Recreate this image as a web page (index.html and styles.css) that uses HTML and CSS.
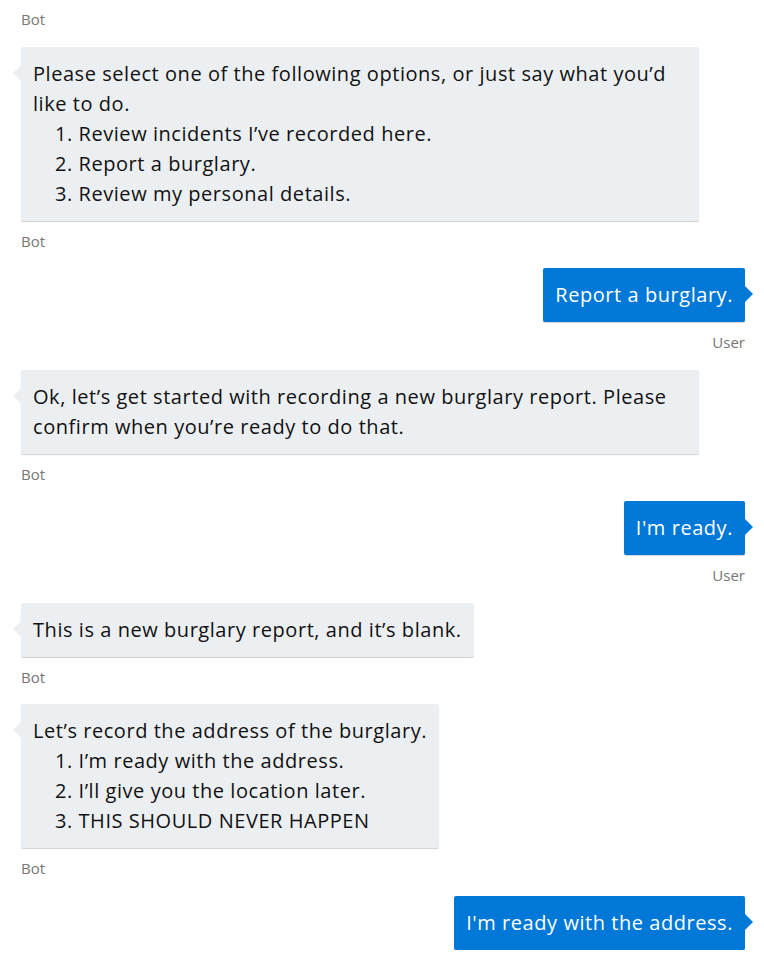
FILE: index.html
```html
<!DOCTYPE html>
<html lang="en">
<head>
<meta charset="utf-8">
<title>Chat</title>
<link rel="stylesheet" href="styles.css">
</head>
<body>
<div class="chat">
  <div class="msg bot first">
    <div class="label">Bot</div>
  </div>

  <div class="msg bot">
    <div class="bubble">
      <div class="line">Please select one of the following options, or just say what you’d like to do.</div>
      <div class="item">1. Review incidents I’ve recorded here.</div>
      <div class="item">2. Report a burglary.</div>
      <div class="item">3. Review my personal details.</div>
    </div>
    <div class="label">Bot</div>
  </div>

  <div class="msg user">
    <div class="bubble">Report a burglary.</div>
    <div class="label">User</div>
  </div>

  <div class="msg bot">
    <div class="bubble">Ok, let’s get started with recording a new burglary report. Please confirm when you’re ready to do that.</div>
    <div class="label">Bot</div>
  </div>

  <div class="msg user">
    <div class="bubble">I'm ready.</div>
    <div class="label">User</div>
  </div>

  <div class="msg bot">
    <div class="bubble">This is a new burglary report, and it’s blank.</div>
    <div class="label">Bot</div>
  </div>

  <div class="msg bot">
    <div class="bubble">
      <div class="line">Let’s record the address of the burglary.</div>
      <div class="item">1. I’m ready with the address.</div>
      <div class="item">2. I’ll give you the location later.</div>
      <div class="item">3. THIS SHOULD NEVER HAPPEN</div>
    </div>
    <div class="label">Bot</div>
  </div>

  <div class="msg user">
    <div class="bubble">I'm ready with the address.</div>
  </div>
</div>
</body>
</html>
```

FILE: styles.css
```css
html, body {
  margin: 0;
  padding: 0;
  background: #ffffff;
}

body {
  font-family: "Open Sans", "Noto Sans", sans-serif;
  color: #000000;
}

.chat {
  display: flex;
  flex-direction: column;
  gap: 17.5px;
  padding: 9px 19px 0 21px;
}

.msg {
  display: flex;
  flex-direction: column;
  align-items: flex-start;
}

.msg.user {
  align-items: flex-end;
}

.bubble {
  position: relative;
  max-width: 678px;
  box-sizing: border-box;
  padding: 12px;
  font-size: 20px;
  line-height: 30px;
  letter-spacing: 0.55px;
  color: #111111;
  background: #eceff1;
  border-radius: 2px;
  box-shadow: 0 1px 1px rgba(0, 0, 0, 0.18);
}

.bubble::before {
  content: "";
  position: absolute;
  top: 18px;
  width: 0;
  height: 0;
  border-top: 8px solid transparent;
  border-bottom: 8px solid transparent;
}

.bot .bubble::before {
  left: -8px;
  border-right: 8px solid #eceff1;
}

.user .bubble {
  background: #0078d7;
  color: #ffffff;
}

.user .bubble::before {
  right: -8px;
  border-left: 8px solid #0078d7;
}

.item {
  padding-left: 22px;
}

.label {
  margin-top: 10px;
  font-size: 15px;
  line-height: 20px;
  color: #767676;
}

.first .label {
  margin-top: 0;
}
```
